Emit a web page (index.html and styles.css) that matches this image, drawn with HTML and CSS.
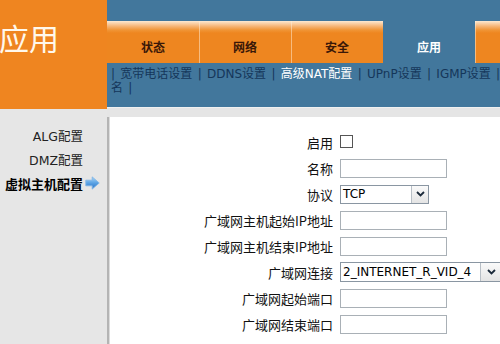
FILE: index.html
```html
<!DOCTYPE html>
<html>
<head>
<meta charset="utf-8">
<link rel="stylesheet" href="styles.css">
</head>
<body>
<div class="page">
  <div class="leftcol">
    <div class="logo"><span class="logo-text">应用</span></div>
    <div class="side">
      <div class="side-item"><span>ALG配置</span><span class="icon-slot"></span></div>
      <div class="side-item"><span>DMZ配置</span><span class="icon-slot"></span></div>
      <div class="side-item active"><span>虚拟主机配置</span><span class="icon-slot">
        <svg width="15" height="14" viewBox="0 0 15 14">
          <defs>
            <linearGradient id="ag" x1="0" y1="0" x2="0" y2="1">
              <stop offset="0" stop-color="#a8d6f7"/>
              <stop offset="0.5" stop-color="#5aa2e4"/>
              <stop offset="1" stop-color="#2a72c4"/>
            </linearGradient>
          </defs>
          <polygon points="0.8,4.2 7.2,4.2 7.2,0.9 14.2,7 7.2,13.1 7.2,9.8 0.8,9.8" fill="url(#ag)" stroke="#7fb5e6" stroke-width="0.9"/>
        </svg>
      </span></div>
    </div>
  </div>
  <div class="rightcol">
    <div class="header">
      <div class="tabs">
        <div class="tab">状态</div>
        <div class="tab">网络</div>
        <div class="tab">安全</div>
        <div class="tab tab-active">应用</div>
        <div class="tab"></div>
      </div>
      <div class="submenu">
        <div class="subline">| 宽带电话设置 | DDNS设置 | <span class="sub-active">高级NAT配置</span> | UPnP设置 | IGMP设置 |</div>
        <div class="subline">名 |</div>
      </div>
    </div>
    <div class="band"></div>
    <div class="content">
      <div class="form">
        <div class="label">启用</div>
        <div class="field"><span class="checkbox"></span></div>

        <div class="label">名称</div>
        <div class="field"><span class="input"></span></div>

        <div class="label">协议</div>
        <div class="field">
          <span class="select sel-short"><span class="sel-value">TCP</span><span class="sel-btn"><svg width="9" height="6" viewBox="0 0 9 6"><polyline points="1,1 4.5,4.5 8,1" fill="none" stroke="#1b2a3a" stroke-width="1.8"/></svg></span></span>
        </div>

        <div class="label">广域网主机起始IP地址</div>
        <div class="field"><span class="input"></span></div>

        <div class="label">广域网主机结束IP地址</div>
        <div class="field"><span class="input"></span></div>

        <div class="label">广域网连接</div>
        <div class="field">
          <span class="select sel-long"><span class="sel-value">2_INTERNET_R_VID_4</span><span class="sel-btn"><svg width="9" height="6" viewBox="0 0 9 6"><polyline points="1,1 4.5,4.5 8,1" fill="none" stroke="#1b2a3a" stroke-width="1.8"/></svg></span></span>
        </div>

        <div class="label">广域网起始端口</div>
        <div class="field"><span class="input"></span></div>

        <div class="label">广域网结束端口</div>
        <div class="field"><span class="input"></span></div>
      </div>
    </div>
  </div>
</div>
</body>
</html>
```

FILE: styles.css
```css
html, body {
  margin: 0;
  padding: 0;
}
body {
  width: 500px;
  height: 344px;
  overflow: hidden;
  font-family: "DejaVu Sans", "Noto Sans CJK SC", sans-serif;
  background: #ffffff;
}
.page {
  display: grid;
  grid-template-columns: 107px 393px;
  height: 344px;
  overflow: hidden;
}
.leftcol {
  display: flex;
  flex-direction: column;
  background: #e6e6e6;
}
.logo {
  height: 109px;
  background: #ef8520;
  overflow: hidden;
  display: flex;
  align-items: flex-start;
}
.logo-text {
  font-family: "Noto Sans CJK SC", sans-serif;
  color: #fff8ec;
  font-size: 30px;
  line-height: 30px;
  margin-top: 22px;
  margin-left: -1px;
}
.side {
  padding-top: 14px;
  display: flex;
  flex-direction: column;
}
.side-item {
  display: flex;
  justify-content: flex-end;
  align-items: center;
  height: 24px;
  padding-right: 7px;
  font-size: 12.5px;
  color: #222;
  font-family: "DejaVu Sans", "Noto Sans CJK SC", sans-serif;
}
.side-item.active {
  font-weight: bold;
  color: #000;
  font-family: "Noto Sans CJK SC", sans-serif;
  font-size: 13px;
}
.icon-slot {
  width: 17px;
  display: flex;
  justify-content: flex-end;
  align-items: center;
}
.rightcol {
  display: flex;
  flex-direction: column;
  min-width: 0;
}
.header {
  height: 107px;
  background: #42779c;
  padding-top: 21px;
  box-sizing: border-box;
  overflow: hidden;
}
.tabs {
  display: flex;
  height: 42px;
}
.tab {
  width: 92px;
  flex: none;
  background: linear-gradient(#fde9d2 0px, #f6b77a 5px, #f09536 9px, #ee8620 12px, #ee8620 100%);
  box-shadow: inset 1px 0 0 rgba(255,240,220,0.5);
  display: flex;
  justify-content: center;
  align-items: center;
  padding-top: 9px;
  box-sizing: border-box;
  font-family: "Noto Sans CJK SC", sans-serif;
  font-weight: bold;
  font-size: 12px;
  color: #3a1808;
}
.tab:first-child {
  box-shadow: none;
}
.tab.tab-active {
  background: transparent;
  box-shadow: none;
  color: #ffffff;
}
.submenu {
  padding-top: 4px;
  padding-left: 4px;
  font-size: 12px;
  line-height: 14px;
  color: #15365a;
  word-spacing: 1.5px;
}
.subline {
  white-space: nowrap;
  overflow: hidden;
}
.sub-active {
  color: #ffffff;
}
.band {
  height: 10px;
  background: #e5e5e5;
  border-top: 1px solid #f0f0f0;
  box-sizing: border-box;
}
.content {
  flex: 1;
  background: #ffffff;
  border-left: 2px solid #b4b4b4;
  box-shadow: inset 1px 0 0 #dcdcdc;
  overflow: hidden;
}
.form {
  display: grid;
  grid-template-columns: 224px 1fr;
  column-gap: 7px;
  grid-auto-rows: 26px;
  padding-top: 12px;
}
.label {
  display: flex;
  justify-content: flex-end;
  align-items: center;
  font-family: "Noto Sans CJK SC", sans-serif;
  font-size: 13px;
  color: #111;
  white-space: nowrap;
}
.field {
  display: flex;
  align-items: center;
  min-width: 0;
}
.checkbox {
  width: 11px;
  height: 11px;
  border: 1px solid #555;
  background: #fff;
  margin-top: -1px;
}
.input {
  width: 105px;
  height: 17px;
  border: 1px solid #a9b0b6;
  background: #fff;
}
.select {
  display: flex;
  flex: none;
  height: 17px;
  border: 1px solid #8a96a2;
  background: #fff;
  font-size: 12px;
  color: #000;
  box-sizing: content-box;
}
.sel-short {
  width: 87px;
}
.sel-long {
  width: 162px;
  height: 18px;
}
.sel-value {
  flex: 1;
  padding-left: 2px;
  line-height: 17px;
  white-space: nowrap;
  overflow: hidden;
}
.sel-long .sel-value {
  flex: none;
  width: 137px;
  line-height: 18px;
}
.sel-btn {
  width: 16px;
  flex: none;
  display: flex;
  justify-content: center;
  align-items: center;
  background: linear-gradient(#fafafa, #e4e4e4);
  border-left: 1px solid #b8bfc6;
}
.sel-long .sel-btn {
  width: 20px;
}
```
